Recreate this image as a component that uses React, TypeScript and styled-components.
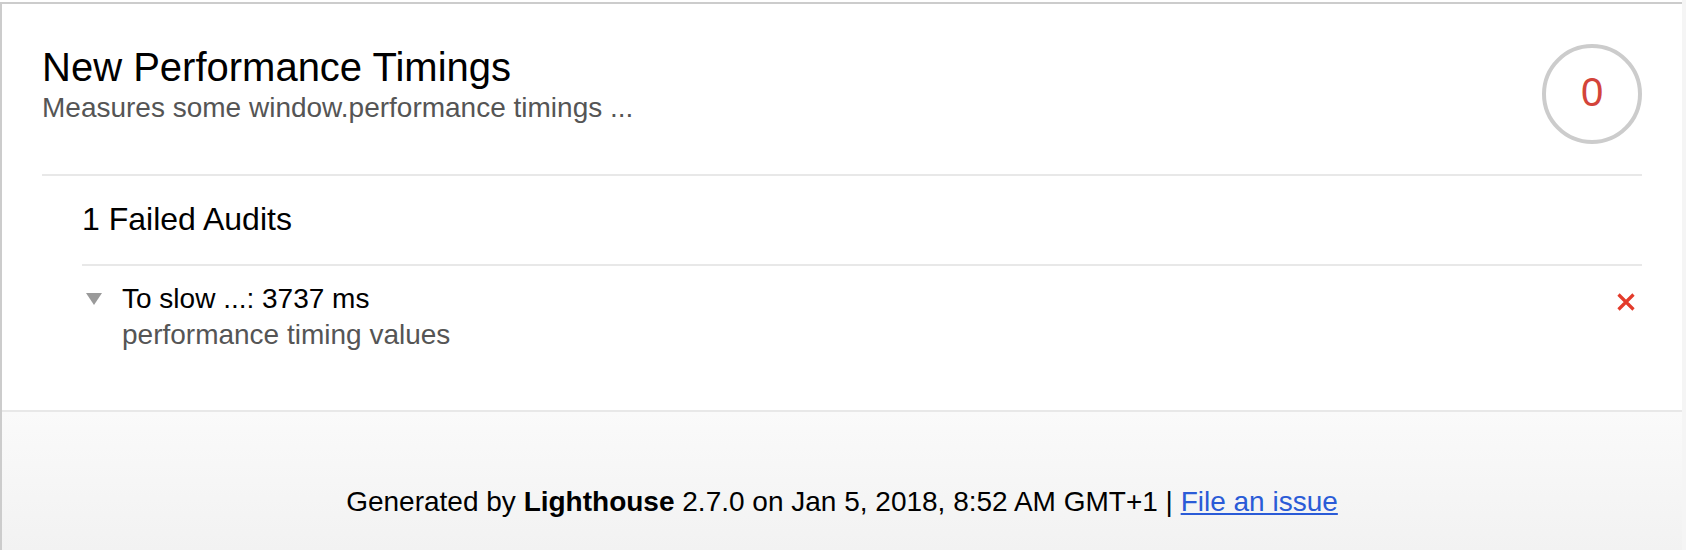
import React from "react";
import styled, { createGlobalStyle } from "styled-components";

const GlobalStyle = createGlobalStyle`
  html, body {
    margin: 0;
    padding: 0;
    background: #ffffff;
    font-family: "Liberation Sans", Arial, Helvetica, sans-serif;
  }
`;

const Page = styled.div`
  display: flex;
  align-items: stretch;
  height: 550px;
  overflow: hidden;
`;

const Frame = styled.div`
  flex: 1;
  display: flex;
  flex-direction: column;
  margin-top: 2px;
  border-top: 2px solid #cccccc;
  border-left: 2px solid #cccccc;
`;

const Gutter = styled.div`
  width: 4px;
  flex: none;
  background: #f5f5f5;
`;

const Card = styled.section`
  background: #ffffff;
  padding: 0 40px 40px;
  border-bottom: 2px solid #e8e8e8;
`;

const Header = styled.header`
  display: flex;
  justify-content: space-between;
  align-items: flex-start;
  padding: 40px 0 30px;
  border-bottom: 2px solid #e8e8e8;
`;

const HeaderText = styled.div`
  display: flex;
  flex-direction: column;
`;

const Title = styled.h1`
  margin: 0;
  font-size: 40px;
  line-height: 46px;
  font-weight: 400;
  color: #000000;
`;

const Subtitle = styled.div`
  font-size: 28px;
  line-height: 36px;
  color: #555555;
`;

const ScoreGauge = styled.div`
  width: 100px;
  height: 100px;
  box-sizing: border-box;
  border: 4px solid #cccccc;
  border-radius: 50%;
  display: flex;
  align-items: center;
  justify-content: center;
  padding-bottom: 4px;
  font-size: 40px;
  line-height: 46px;
  color: #d3443a;
`;

const Group = styled.div`
  margin-left: 40px;
`;

const GroupHeader = styled.h2`
  margin: 0;
  font-size: 32px;
  line-height: 37px;
  font-weight: 400;
  color: #000000;
  padding: 25px 0 26px;
  border-bottom: 2px solid #e8e8e8;
`;

const AuditRow = styled.div`
  display: flex;
  align-items: flex-start;
  padding: 15px 0 17px;
`;

const Arrow = styled.svg`
  flex: none;
  margin: 12px 20px 0 4px;
`;

const AuditText = styled.div`
  flex: 1;
  display: flex;
  flex-direction: column;
`;

const AuditTitle = styled.div`
  font-size: 28px;
  line-height: 36px;
  color: #000000;
`;

const AuditDesc = styled.div`
  font-size: 28px;
  line-height: 36px;
  color: #555555;
`;

const FailIcon = styled.svg`
  flex: none;
  margin: 11px 6px 0 0;
`;

const Footer = styled.footer`
  flex: 1;
  text-align: center;
  font-size: 28px;
  line-height: 36px;
  color: #000000;
  padding: 72px 0 30px;
  background: linear-gradient(#fafafa, #f2f2f2);
`;

const Link = styled.a`
  color: #2a5bd7;
  text-decoration: underline;
`;

export default function App() {
  return (
    <>
      <GlobalStyle />
      <Page>
        <Frame>
          <Card>
            <Header>
              <HeaderText>
                <Title>New Performance Timings</Title>
                <Subtitle>Measures some window.performance timings ...</Subtitle>
              </HeaderText>
              <ScoreGauge>0</ScoreGauge>
            </Header>
            <Group>
              <GroupHeader>1 Failed Audits</GroupHeader>
              <AuditRow>
                <Arrow width="16" height="12" viewBox="0 0 16 12" aria-hidden="true">
                  <polygon points="0,0 16,0 8,12" fill="#9a9a9a" />
                </Arrow>
                <AuditText>
                  <AuditTitle>To slow ...: 3737 ms</AuditTitle>
                  <AuditDesc>performance timing values</AuditDesc>
                </AuditText>
                <FailIcon width="20" height="20" viewBox="0 0 20 20" aria-hidden="true">
                  <path d="M2.5 2.5 L17.5 17.5 M17.5 2.5 L2.5 17.5" stroke="#e33b2b" strokeWidth="3.2" fill="none" />
                </FailIcon>
              </AuditRow>
            </Group>
          </Card>
          <Footer>
            Generated by <b>Lighthouse</b> 2.7.0 on Jan 5, 2018, 8:52 AM GMT+1 |{" "}
            <Link href="#">File an issue</Link>
          </Footer>
        </Frame>
        <Gutter />
      </Page>
    </>
  );
}
